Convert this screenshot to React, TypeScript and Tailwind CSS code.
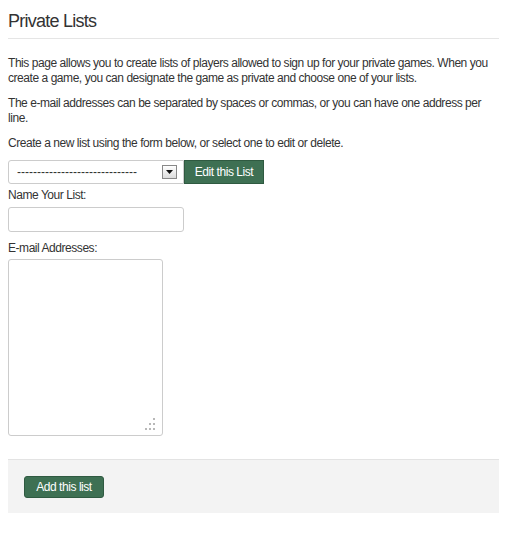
import React from "react";

export default function App() {
  const dashes = "------------------------------";
  return (
    <div className="w-[519px] min-h-[537px] bg-white px-2 font-['Liberation_Sans',Arial,sans-serif] text-[12px] text-[#333] tracking-[-0.45px]">
      <div className="w-[491px]">
        <h1 className="pt-[11px] pb-[7px] text-[18px] leading-[20px] font-normal text-[#333] tracking-[-0.75px] border-b border-[#e5e5e5]">
          Private Lists
        </h1>
        <p className="mt-[17px] mb-[10px] leading-[15px]">
          This page allows you to create lists of players allowed to sign up for your private games. When you create a game, you can designate the game as private and choose one of your lists.
        </p>
        <p className="mb-[10px] leading-[15px]">
          The e-mail addresses can be separated by spaces or commas, or you can have one address per line.
        </p>
        <p className="mb-[9px] leading-[15px]">
          Create a new list using the form below, or select one to edit or delete.
        </p>
        <div className="flex items-stretch h-[24px]">
          <div className="relative w-[176px] h-[24px] border border-[#ccc] rounded-l-[3px] bg-white">
            <select className="appearance-none w-full h-full pl-[8px] pr-[24px] bg-transparent outline-none text-[12px] text-[#333] tracking-normal font-['Liberation_Sans',Arial,sans-serif]">
              <option>{dashes}</option>
            </select>
            <div className="pointer-events-none absolute left-[153px] top-[4px] w-[15px] h-[14px] border border-[#888] bg-gradient-to-b from-white to-[#dcdcdc] flex items-center justify-center">
              <svg width="7" height="4" viewBox="0 0 7 4">
                <path d="M0 0 H7 L3.5 4 Z" fill="#111" />
              </svg>
            </div>
          </div>
          <button className="w-[80px] h-[24px] bg-[#3e7053] border border-[#2f5a41] text-white text-[12px] leading-[22px]">
            Edit this List
          </button>
        </div>
        <label className="block mt-[4px] leading-[15px]">Name Your List:</label>
        <input
          type="text"
          className="block mt-[4px] w-[176px] h-[25px] border border-[#ccc] rounded-[3px] bg-white outline-none"
        />
        <label className="block mt-[9px] leading-[15px]">E-mail Addresses:</label>
        <div className="relative mt-[3px] w-[155px] h-[177px]">
          <textarea className="block w-full h-full resize-none border border-[#ccc] rounded-[3px] bg-white outline-none" />
          <svg className="absolute left-0 top-0 pointer-events-none" width="155" height="177">
            {[
              [146, 160],
              [142, 165],
              [146, 165],
              [138, 170],
              [142, 170],
              [146, 170],
            ].map(([x, y], i) => (
              <rect key={i} x={x - 1} y={y - 1} width="2" height="2" fill="#b8b8b8" />
            ))}
          </svg>
        </div>
        <div className="mt-[23px] w-[491px] border-t border-[#e3e3e3] bg-[#f3f3f3] pt-[16px] pb-[15px] px-[16px]">
          <button className="w-[80px] h-[22px] rounded-[3px] bg-[#3e7053] border border-[#2f5a41] text-white text-[12px] leading-[20px]">
            Add this list
          </button>
        </div>
      </div>
    </div>
  );
}
